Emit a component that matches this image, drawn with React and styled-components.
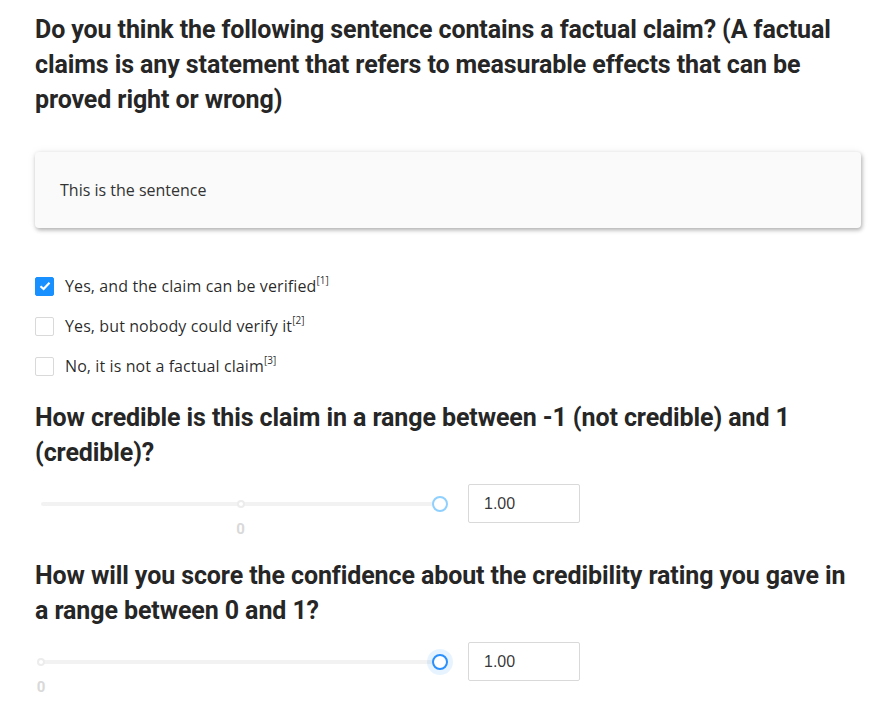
import React from "react";
import styled, { createGlobalStyle } from "styled-components";

const Global = createGlobalStyle`
  body {
    margin: 0;
    background: #ffffff;
    font-family: "Open Sans", "Noto Sans", sans-serif;
  }
`;

const Page = styled.div`
  padding: 12px 26px 20px 35px;
`;

const Question = styled.h3`
  margin: 0;
  font-family: Roboto, "Liberation Sans", sans-serif;
  font-weight: 700;
  font-size: 25px;
  letter-spacing: -0.1px;
  line-height: 35px;
  color: #262626;
`;

const Card = styled.div`
  margin-top: 35px;
  background: #fafafa;
  border-radius: 4px;
  padding: 26px 24px 26px 25px;
  font-size: 16px;
  line-height: 24px;
  color: #333;
  box-shadow: 1px 2px 4px rgba(0, 0, 0, 0.3), 0 0 10px rgba(0, 0, 0, 0.06);
`;

const Options = styled.div`
  margin-top: 38px;
  margin-bottom: 14px;
  display: flex;
  flex-direction: column;
`;

const Option = styled.label`
  display: flex;
  align-items: center;
  height: 40px;
  gap: 11px;
  font-size: 16px;
  letter-spacing: 0.1px;
  color: rgba(0, 0, 0, 0.85);
  cursor: pointer;
`;

const Box = styled.span`
  width: 19px;
  height: 19px;
  box-sizing: border-box;
  border-radius: 2px;
  border: 1px solid ${(p) => (p.checked ? "#1890ff" : "#d9d9d9")};
  background: ${(p) => (p.checked ? "#1890ff" : "#fff")};
  display: flex;
  align-items: center;
  justify-content: center;
`;

const Ref = styled.sup`
  font-size: 10px;
  vertical-align: top;
  position: relative;
  top: -2px;
  letter-spacing: 0;
`;

const SliderRow = styled.div`
  margin-top: 14px;
  margin-bottom: 35px;
  display: flex;
  align-items: center;
`;

const Slider = styled.div`
  position: relative;
  width: 399px;
  height: 39px;
  margin: 0 6px;
`;

const Track = styled.div`
  position: absolute;
  left: 0;
  right: 0;
  top: 18px;
  height: 4px;
  border-radius: 2px;
  background: #f2f2f2;
`;

const Dot = styled.span`
  position: absolute;
  top: 16px;
  left: ${(p) => p.pos}%;
  margin-left: -4px;
  width: 8px;
  height: 8px;
  box-sizing: border-box;
  border-radius: 50%;
  border: 2px solid #ececec;
  background: #fff;
`;

const MarkLabel = styled.span`
  position: absolute;
  top: 36px;
  left: ${(p) => p.pos}%;
  transform: translateX(-50%);
  font-family: Roboto, "Liberation Sans", sans-serif;
  font-size: 15px;
  font-weight: 700;
  line-height: 18px;
  color: #d9d9d9;
`;

const Handle = styled.span`
  position: absolute;
  top: 12px;
  left: ${(p) => p.pos}%;
  margin-left: -8px;
  width: 16px;
  height: 16px;
  box-sizing: border-box;
  border-radius: 50%;
  background: #fff;
  border: 2px solid ${(p) => (p.focused ? "#2b8ffc" : "#8fd0ff")};
  box-shadow: ${(p) => (p.focused ? "0 0 0 5px rgba(24, 144, 255, 0.1)" : "none")};
`;

const NumberBox = styled.input`
  margin-left: 22px;
  width: 112px;
  height: 39px;
  box-sizing: border-box;
  border: 1px solid #d9d9d9;
  border-radius: 2px;
  padding: 0 15px;
  font-family: "Liberation Sans", Arial, sans-serif;
  font-size: 16px;
  color: rgba(0, 0, 0, 0.8);
  outline: none;
`;

const Check = () => (
  <svg width="12" height="10" viewBox="0 0 12 10">
    <path d="M1.5 5.2 L4.6 8 L10.5 1.8" fill="none" stroke="#fff" strokeWidth="2.2" />
  </svg>
);

const options = [
  { text: "Yes, and the claim can be verified", ref: 1, checked: true },
  { text: "Yes, but nobody could verify it", ref: 2 },
  { text: "No, it is not a factual claim", ref: 3 },
];

const RangeSlider = ({ min, max, value, focused }) => {
  const pos = ((value - min) / (max - min)) * 100;
  const zero = ((0 - min) / (max - min)) * 100;
  return (
    <SliderRow>
      <Slider>
        <Track />
        <Dot pos={zero} />
        <MarkLabel pos={zero}>0</MarkLabel>
        <Handle pos={pos} focused={focused} />
      </Slider>
      <NumberBox readOnly value={value.toFixed(2)} />
    </SliderRow>
  );
};

export default function App() {
  return (
    <Page>
      <Global />
      <Question>
        Do you think the following sentence contains a factual claim? (A factual claims is any
        statement that refers to measurable effects that can be proved right or wrong)
      </Question>
      <Card>This is the sentence</Card>
      <Options>
        {options.map((o) => (
          <Option key={o.ref}>
            <Box checked={o.checked}>{o.checked && <Check />}</Box>
            <span>
              {o.text}
              <Ref>[{o.ref}]</Ref>
            </span>
          </Option>
        ))}
      </Options>
      <Question>
        How credible is this claim in a range between -1 (not credible) and 1 (credible)?
      </Question>
      <RangeSlider min={-1} max={1} value={1} />
      <Question>
        How will you score the confidence about the credibility rating you gave in a range between
        0 and 1?
      </Question>
      <RangeSlider min={0} max={1} value={1} focused />
    </Page>
  );
}
